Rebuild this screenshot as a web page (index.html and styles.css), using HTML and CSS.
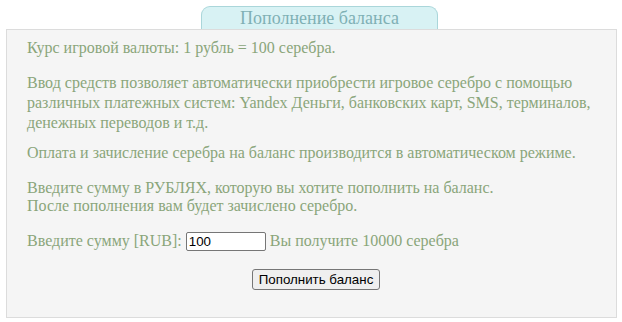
FILE: index.html
```html
<!DOCTYPE html>
<html lang="ru">
<head>
  <meta charset="UTF-8">
  <title>Пополнение баланса</title>
  <link rel="stylesheet" href="styles.css">
</head>
<body>
  <div class="wrap">
    <div class="tab">Пополнение баланса</div>
    <div class="panel">
      <p>Курс игровой валюты: 1 рубль = 100 серебра.</p>
      <p class="info">Ввод средств позволяет автоматически приобрести игровое серебро с помощью различных платежных систем: Yandex Деньги, банковских карт, SMS, терминалов, денежных переводов и т.д.</p>
      <p>Оплата и зачисление серебра на баланс производится в автоматическом режиме.</p>
      <p class="hint">Введите сумму в РУБЛЯХ, которую вы хотите пополнить на баланс.<br>После пополнения вам будет зачислено серебро.</p>
      <p class="sum-row">Введите сумму [RUB]: <input type="text" class="sum-input" value="100"> Вы получите 10000 серебра</p>
      <div class="actions">
        <button class="btn">Пополнить баланс</button>
      </div>
    </div>
  </div>
</body>
</html>
```
FILE: styles.css
```css
body {
  margin: 0;
  background-color: #fff;
  font-family: "Liberation Serif", serif;
}

.wrap {
  padding: 6px 5px 6px 6px;
}

.tab {
  width: 235px;
  height: 22px;
  margin-left: 195px;
  background-color: #d8f2f4;
  border: 1px solid #aad6da;
  border-bottom: none;
  border-radius: 9px 9px 0 0;
  color: #7fb0b4;
  font-size: 18px;
  line-height: 22px;
  text-align: center;
}

.panel {
  background-color: #f5f5f5;
  border: 1px solid #dcdcdc;
  padding: 8px 20px 27px 20px;
  color: #8aa57a;
  font-size: 16px;
  line-height: 20px;
}

.panel p {
  margin: 0 0 15px 0;
}

.panel .info {
  margin-bottom: 10px;
}

.panel .hint {
  margin-top: 16px;
  margin-bottom: 16px;
  line-height: 18px;
}

.panel .sum-row {
  margin-bottom: 0;
}

.sum-input {
  width: 74px;
  font-family: "Liberation Sans", Arial, sans-serif;
  font-size: 13.33px;
  padding: 1px 2px;
  border: 1px solid #767676;
  border-radius: 2px;
  background: #fff;
  color: #000;
}

.actions {
  display: flex;
  justify-content: center;
  padding-left: 9px;
  margin-top: 18px;
}

.btn {
  font-family: "Liberation Sans", Arial, sans-serif;
  font-size: 13.33px;
  padding: 2px 6px;
  border: 1px solid #767676;
  border-radius: 3px;
  background-color: #efefef;
  color: #000;
}
```
